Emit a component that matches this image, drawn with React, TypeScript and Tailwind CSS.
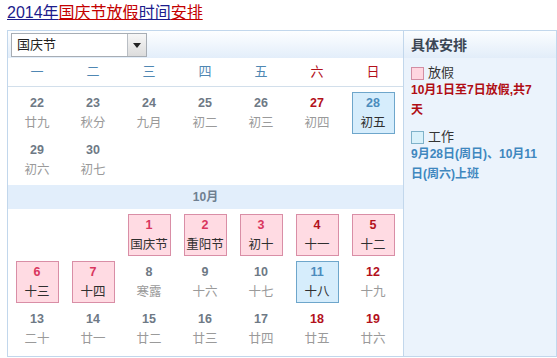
import React from 'react';

type Kind = 'plain' | 'weekend' | 'holiday' | 'holidayWeekend' | 'work';

interface Day {
  n: number;
  lunar: string;
  kind: Kind;
}

const weekdays = ['一', '二', '三', '四', '五', '六', '日'];

const september: (Day | null)[][] = [
  [
    { n: 22, lunar: '廿九', kind: 'plain' },
    { n: 23, lunar: '秋分', kind: 'plain' },
    { n: 24, lunar: '九月', kind: 'plain' },
    { n: 25, lunar: '初二', kind: 'plain' },
    { n: 26, lunar: '初三', kind: 'plain' },
    { n: 27, lunar: '初四', kind: 'weekend' },
    { n: 28, lunar: '初五', kind: 'work' },
  ],
  [
    { n: 29, lunar: '初六', kind: 'plain' },
    { n: 30, lunar: '初七', kind: 'plain' },
    null, null, null, null, null,
  ],
];

const october: (Day | null)[][] = [
  [
    null,
    null,
    { n: 1, lunar: '国庆节', kind: 'holiday' },
    { n: 2, lunar: '重阳节', kind: 'holiday' },
    { n: 3, lunar: '初十', kind: 'holiday' },
    { n: 4, lunar: '十一', kind: 'holidayWeekend' },
    { n: 5, lunar: '十二', kind: 'holidayWeekend' },
  ],
  [
    { n: 6, lunar: '十三', kind: 'holiday' },
    { n: 7, lunar: '十四', kind: 'holiday' },
    { n: 8, lunar: '寒露', kind: 'plain' },
    { n: 9, lunar: '十六', kind: 'plain' },
    { n: 10, lunar: '十七', kind: 'plain' },
    { n: 11, lunar: '十八', kind: 'work' },
    { n: 12, lunar: '十九', kind: 'weekend' },
  ],
  [
    { n: 13, lunar: '二十', kind: 'plain' },
    { n: 14, lunar: '廿一', kind: 'plain' },
    { n: 15, lunar: '廿二', kind: 'plain' },
    { n: 16, lunar: '廿三', kind: 'plain' },
    { n: 17, lunar: '廿四', kind: 'plain' },
    { n: 18, lunar: '廿五', kind: 'weekend' },
    { n: 19, lunar: '廿六', kind: 'weekend' },
  ],
];

function DayCell({ day }: { day: Day | null }) {
  if (!day) return <div className="h-[47px]" />;

  const boxed = day.kind === 'holiday' || day.kind === 'holidayWeekend' || day.kind === 'work';
  const numColor =
    day.kind === 'plain'
      ? 'text-[#6e7985]'
      : day.kind === 'weekend' || day.kind === 'holidayWeekend'
        ? 'text-[#b3111b]'
        : day.kind === 'holiday'
          ? 'text-[#d9365e]'
          : 'text-[#4b8cbd]';

  const boxClass =
    day.kind === 'work'
      ? 'border border-[#6ea6cb] bg-[#d6edfc]'
      : boxed
        ? 'border border-[#d98ea6] bg-[#ffdbe3]'
        : '';

  return (
    <div className="flex h-[47px] items-center justify-center">
      <div className={`flex h-[42px] w-[43px] flex-col items-center justify-center ${boxClass}`}>
        <div className={`text-[12.5px] font-bold leading-[20px] ${numColor}`}>{day.n}</div>
        <div className={`text-[12.5px] leading-[20px] whitespace-nowrap ${boxed ? 'text-[#2f2f2f]' : 'text-[#9a9a9a]'}`}>
          {day.lunar}
        </div>
      </div>
    </div>
  );
}

function Rows({ rows }: { rows: (Day | null)[][] }) {
  return (
    <div className="grid grid-cols-[repeat(7,56px)] pl-px">
      {rows.flat().map((d, i) => (
        <DayCell key={i} day={d} />
      ))}
    </div>
  );
}

export default function App() {
  return (
    <div
      className="h-[358px] w-[557px] overflow-hidden bg-white"
      style={{ fontFamily: '"Liberation Sans", "Noto Sans CJK SC", sans-serif' }}
    >
      {/* title link */}
      <div className="h-[30px] pl-[7px] pt-[3px] text-[16px] leading-[20px]">
        <span className="text-[#1c1c8c] underline">2014年</span>
        <span className="text-[#c40000] underline">国庆节放假</span>
        <span className="text-[#1c1c8c] underline">时间</span>
        <span className="text-[#c40000] underline">安排</span>
      </div>

      <div className="ml-[7px] flex h-[327px] w-[550px] border border-[#c2d7ec]">
        {/* calendar */}
        <div className="flex w-[395px] flex-col">
          <div className="h-[27px] bg-gradient-to-b from-[#fdfeff] to-[#e3eefa] pl-[3px] pt-[2px]">
            <div className="flex h-[24px] w-[136px] border border-[#a7adb4] bg-white">
              <div className="flex-1 pl-[5px] text-[13px] leading-[22px] text-[#222]">国庆节</div>
              <div className="flex w-[19px] items-center justify-center border-l border-[#b9bec4] bg-gradient-to-b from-[#f7f7f7] to-[#dcdcdc]">
                <div className="h-0 w-0 border-x-[4px] border-t-[5px] border-x-transparent border-t-[#222]" />
              </div>
            </div>
          </div>

          <div className="grid h-[29px] grid-cols-[repeat(7,56px)] border-b border-[#d2dfeb] pl-px">
            {weekdays.map((w, i) => (
              <div
                key={w}
                className={`text-center text-[13px] leading-[28px] ${i >= 5 ? 'text-[#b3111b]' : 'text-[#4f87b3]'}`}
              >
                {w}
              </div>
            ))}
          </div>

          <div className="mt-[2px]">
            <Rows rows={september} />
          </div>

          <div className="mt-[2px] h-[24px] bg-[#e2eefb] text-center text-[12px] font-bold leading-[24px] text-[#6f7f90]">
            10月
          </div>

          <div className="mt-[2px]">
            <Rows rows={october} />
          </div>
        </div>

        {/* arrangement panel */}
        <div className="flex-1 border-l border-[#c2d7ec] bg-[#ebf3fc]">
          <div className="h-[27px] bg-gradient-to-b from-[#fbfdff] to-[#e2edf9] pl-[7px] text-[14px] font-bold leading-[28px] text-[#3b4654]">
            具体安排
          </div>
          <div className="pl-[7px] pr-[4px]">
            <div className="mt-[8px] flex h-[14px] items-center gap-[4px]">
              <span className="h-[13px] w-[13px] border border-[#d28ea3] bg-[#ffd6e0]" />
              <span className="text-[13px] text-[#333]">放假</span>
            </div>
            <div className="text-[12px] font-bold leading-[20px] text-[#b00d14]">
              10月1日至7日放假,共7
              <br />
              天
            </div>
            <div className="mt-[10px] flex h-[14px] items-center gap-[4px]">
              <span className="h-[13px] w-[13px] border border-[#7fb2c9] bg-[#d9f1fa]" />
              <span className="text-[13px] text-[#333]">工作</span>
            </div>
            <div className="text-[12px] font-bold leading-[20px] text-[#3f87bf]">
              9月28日(周日)、10月11
              <br />
              日(周六)上班
            </div>
          </div>
        </div>
      </div>
    </div>
  );
}
